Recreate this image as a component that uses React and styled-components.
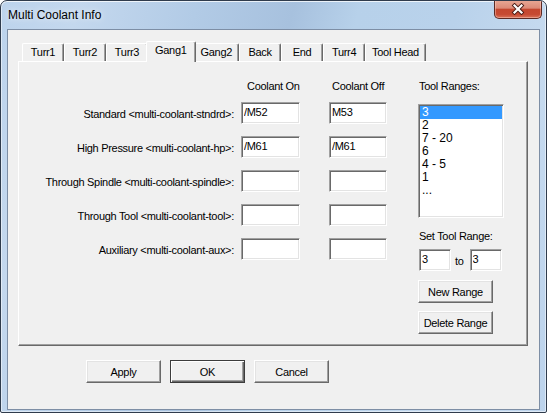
import styled, { createGlobalStyle } from "styled-components";

const tabs = ["Turr1", "Turr2", "Turr3", "Gang1", "Gang2", "Back", "End", "Turr4", "Tool Head"];

const rows = [
  { label: "Standard <multi-coolant-stndrd>:", on: "/M52", off: "M53" },
  { label: "High Pressure <multi-coolant-hp>:", on: "/M61", off: "/M61" },
  { label: "Through Spindle <multi-coolant-spindle>:", on: "", off: "" },
  { label: "Through Tool <multi-coolant-tool>:", on: "", off: "" },
  { label: "Auxiliary <multi-coolant-aux>:", on: "", off: "" },
];

const ranges = ["3", "2", "7 - 20", "6", "4 - 5", "1", "..."];

const GlobalStyle = createGlobalStyle`
  html, body {
    margin: 0;
    padding: 0;
    background: #ffffff;
  }
  body {
    font-family: "Liberation Sans", Arial, sans-serif;
  }
`;

function App() {
  return (
    <>
      <GlobalStyle />
      <Window>
        <TitleBar>
          <Title>Multi Coolant Info</Title>
          <CloseButton>
            <svg width="14" height="12" viewBox="0 0 14 12">
              <path d="M3.5 2.5 L10.5 9.5 M10.5 2.5 L3.5 9.5" stroke="#4b1d16" strokeWidth="4" strokeLinecap="square" />
              <path d="M3.5 2.5 L10.5 9.5 M10.5 2.5 L3.5 9.5" stroke="#ffffff" strokeWidth="2.2" strokeLinecap="square" />
            </svg>
          </CloseButton>
        </TitleBar>
        <Client>
          <TabControl>
            <TabStrip>
              {tabs.map((t) => (
                <Tab key={t} $active={t === "Gang1"}>
                  {t}
                </Tab>
              ))}
            </TabStrip>
            <Panel>
              <FieldArea>
                <HeaderRow>
                  <span />
                  <ColumnHeader $indent={6}>Coolant On</ColumnHeader>
                  <ColumnHeader $indent={3}>Coolant Off</ColumnHeader>
                </HeaderRow>
                <FieldGrid>
                  {rows.map((r) => (
                    <Row key={r.label}>
                      <FieldLabel>{r.label}</FieldLabel>
                      <TextBox $w={59} defaultValue={r.on} />
                      <TextBox $w={58} defaultValue={r.off} />
                    </Row>
                  ))}
                </FieldGrid>
              </FieldArea>
              <RangeColumn>
                <Caption>Tool Ranges:</Caption>
                <ListBox>
                  {ranges.map((r, i) => (
                    <ListItem key={i} $selected={i === 0}>
                      {r}
                    </ListItem>
                  ))}
                </ListBox>
                <Caption $top={12}>Set Tool Range:</Caption>
                <RangeRow>
                  <TextBox $w={32} defaultValue="3" />
                  <ToText>to</ToText>
                  <TextBox $w={32} defaultValue="3" />
                </RangeRow>
                <PushButton $top={9}>New Range</PushButton>
                <PushButton $top={8}>Delete Range</PushButton>
              </RangeColumn>
            </Panel>
          </TabControl>
          <ButtonRow>
            <PushButton>Apply</PushButton>
            <PushButton $default>OK</PushButton>
            <PushButton>Cancel</PushButton>
          </ButtonRow>
        </Client>
      </Window>
    </>
  );
}

const Window = styled.div`
  width: 547px;
  height: 413px;
  box-sizing: border-box;
  display: flex;
  flex-direction: column;
  border: 1px solid #2f3b4c;
  border-radius: 7px 7px 2px 2px;
  box-shadow: inset 0 1px 0 rgba(255, 255, 255, 0.75), inset 1px 0 0 rgba(255, 255, 255, 0.5),
    inset -1px 0 0 rgba(255, 255, 255, 0.5), inset 0 -1px 0 rgba(255, 255, 255, 0.5);
  background: linear-gradient(
    105deg,
    #bcd3ec 0%,
    #c4d8ee 12%,
    #b2cbe6 30%,
    #a7c1de 45%,
    #b7d1ea 55%,
    #b9d2eb 70%,
    #c6daef 85%,
    #bcd3ec 100%
  );
  overflow: hidden;
`;

const TitleBar = styled.div`
  height: 28px;
  display: flex;
  align-items: flex-start;
  padding-left: 7px;
`;

const Title = styled.div`
  line-height: 28px;
  font-size: 12px;
  color: #000;
  text-shadow: 0 0 6px rgba(255, 255, 255, 0.9);
`;

const CloseButton = styled.div`
  margin-left: auto;
  margin-right: 4px;
  margin-top: -1px;
  width: 48px;
  height: 19px;
  box-sizing: border-box;
  display: flex;
  align-items: center;
  justify-content: center;
  border: 1px solid #5c2a24;
  border-top: none;
  border-radius: 0 0 5px 5px;
  background: linear-gradient(180deg, #e9a996 0%, #dc8a77 45%, #c4472f 52%, #c64a33 80%, #d9735a 100%);
  box-shadow: inset 0 0 0 1px rgba(255, 210, 200, 0.45);
`;

const Client = styled.div`
  flex: 1;
  margin: 0 6px 2px 6px;
  border: 1px solid #7d8ea5;
  background: #f0f0f0;
  display: flex;
  flex-direction: column;
`;

const TabControl = styled.div`
  margin: 11px 0 0 10px;
  width: 510px;
`;

const TabStrip = styled.div`
  display: flex;
  align-items: flex-end;
  height: 20px;
  padding-left: 4px;
`;

const Tab = styled.div`
  position: relative;
  z-index: ${(p) => (p.$active ? 2 : 1)};
  box-sizing: border-box;
  min-width: ${(p) => (p.$active ? 46 : 42)}px;
  height: ${(p) => (p.$active ? 21 : 18)}px;
  margin: 0 ${(p) => (p.$active ? -2 : 0)}px ${(p) => (p.$active ? -1 : 0)}px;
  padding: ${(p) => (p.$active ? "1px 8px 0" : "1px 6px 0")};
  background: #f0f0f0;
  border-top: 1px solid #ffffff;
  border-left: 1px solid #ffffff;
  border-right: 1px solid #696969;
  border-radius: 2px 2px 0 0;
  box-shadow: inset -1px 0 0 #a0a0a0;
  font-size: 11px;
  letter-spacing: -0.3px;
  line-height: 15px;
  text-align: center;
  white-space: nowrap;
  color: #000;
`;

const Panel = styled.div`
  position: relative;
  z-index: 1;
  box-sizing: border-box;
  height: 285px;
  display: flex;
  padding-top: 18px;
  border-top: 1px solid #ffffff;
  border-left: 1px solid #ffffff;
  border-right: 1px solid #696969;
  border-bottom: 1px solid #696969;
  box-shadow: inset -1px -1px 0 #a0a0a0;
  background: #f0f0f0;
  font-size: 11px;
  letter-spacing: -0.3px;
  color: #000;
`;

const FieldArea = styled.div`
  display: flex;
  flex-direction: column;
`;

const HeaderRow = styled.div`
  display: grid;
  grid-template-columns: 222px 88px 58px;
  height: 13px;
  line-height: 13px;
  margin-bottom: 9px;
`;

const ColumnHeader = styled.div`
  padding-left: ${(p) => p.$indent}px;
  white-space: nowrap;
`;

const FieldGrid = styled.div`
  display: flex;
  flex-direction: column;
  gap: 12px;
`;

const Row = styled.div`
  display: grid;
  grid-template-columns: 222px 88px 58px;
  align-items: center;
  height: 22px;
`;

const FieldLabel = styled.div`
  text-align: right;
  padding-right: 7px;
  padding-top: 2px;
  white-space: nowrap;
`;

const TextBox = styled.input.attrs({ type: "text" })`
  box-sizing: border-box;
  width: ${(p) => p.$w}px;
  height: 22px;
  margin: 0;
  padding: 0 2px 2px;
  font: inherit;
  font-size: 11px;
  letter-spacing: -0.3px;
  color: #000;
  background: #ffffff;
  outline: none;
  border-style: solid;
  border-width: 1px;
  border-color: #a0a0a0 #ffffff #ffffff #a0a0a0;
  box-shadow: inset 1px 1px 0 #696969, inset -1px -1px 0 #e3e3e3;
`;

const RangeColumn = styled.div`
  margin-left: 31px;
  width: 86px;
  display: flex;
  flex-direction: column;
  align-items: flex-start;
`;

const Caption = styled.div`
  line-height: 13px;
  height: 13px;
  padding-left: 1px;
  margin-top: ${(p) => p.$top || 0}px;
  white-space: nowrap;
`;

const ListBox = styled.div`
  box-sizing: border-box;
  width: 86px;
  height: 114px;
  margin-top: 11px;
  padding: 1px 0 0;
  background: #ffffff;
  border-style: solid;
  border-width: 1px;
  border-color: #a0a0a0 #ffffff #ffffff #a0a0a0;
  box-shadow: inset 1px 1px 0 #696969, inset -1px -1px 0 #e3e3e3;
  font-size: 12px;
  letter-spacing: 0;
`;

const ListItem = styled.div`
  height: 13px;
  line-height: 13px;
  margin: 0 1px 0 1px;
  padding-left: 2px;
  background: ${(p) => (p.$selected ? "#3399ff" : "transparent")};
  color: ${(p) => (p.$selected ? "#ffffff" : "#000000")};
`;

const RangeRow = styled.div`
  display: flex;
  align-items: center;
  margin-top: 6px;
  padding-left: 1px;
`;

const ToText = styled.span`
  margin: 0 6px 0 4px;
  padding-top: 2px;
`;

const PushButton = styled.button`
  box-sizing: border-box;
  width: 75px;
  height: 23px;
  margin: ${(p) => p.$top || 0}px 0 0;
  padding: 0;
  font-family: "Liberation Sans", Arial, sans-serif;
  font-size: 11px;
  letter-spacing: -0.3px;
  color: #000;
  background: #f0f0f0;
  border-style: solid;
  border-width: 1px;
  border-color: ${(p) => (p.$default ? "#3c3c3c" : "#ffffff #696969 #696969 #ffffff")};
  box-shadow: ${(p) =>
    p.$default
      ? "inset 1px 1px 0 #ffffff, inset -1px -1px 0 #696969, inset -2px -2px 0 #a0a0a0"
      : "inset -1px -1px 0 #a0a0a0, inset 1px 1px 0 #e3e3e3"};
  white-space: nowrap;
`;

const ButtonRow = styled.div`
  display: flex;
  gap: 9px;
  margin-top: 14px;
  padding-left: 78px;
`;

export default App;
